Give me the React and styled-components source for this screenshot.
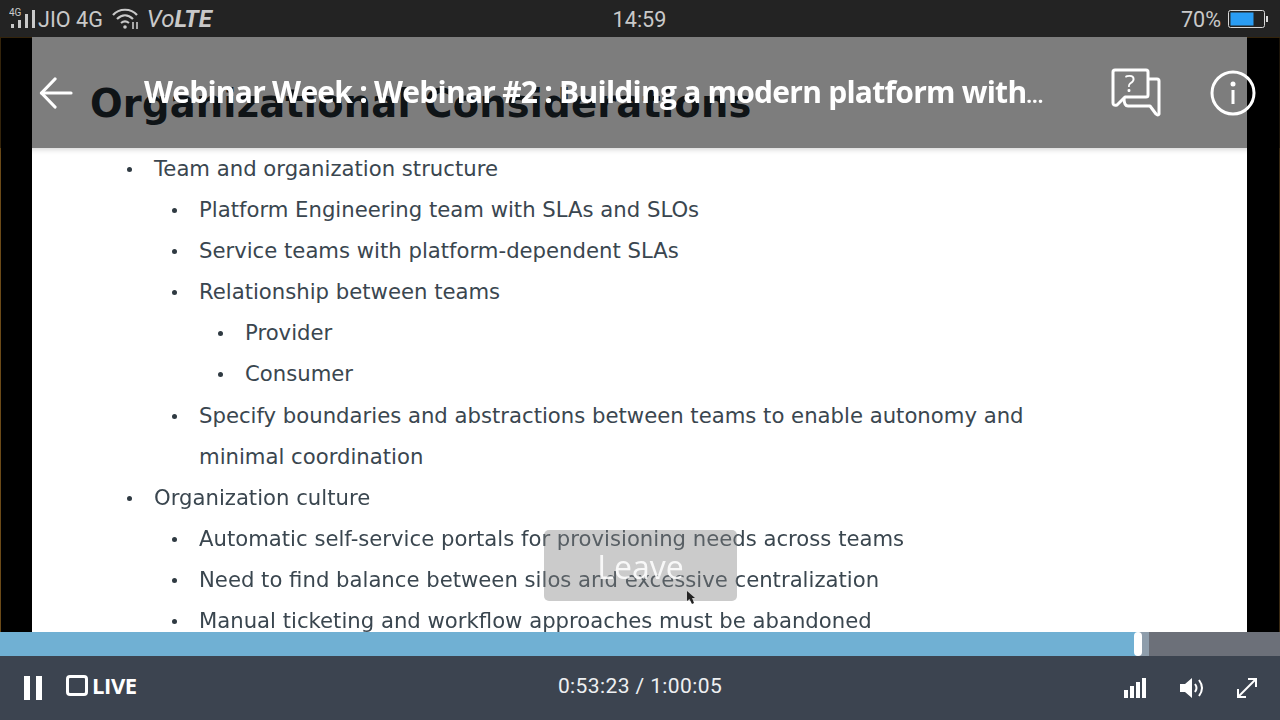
import styled, { createGlobalStyle } from "styled-components";

const GlobalStyle = createGlobalStyle`
  html, body {
    margin: 0;
    padding: 0;
    background: #000;
  }
  * {
    box-sizing: border-box;
  }
`;

const listIndent = [92, 15, 16];

const Screen = styled.div`
  width: 1280px;
  height: 720px;
  display: flex;
  flex-direction: column;
  overflow: hidden;
  font-family: "Roboto", "Liberation Sans", sans-serif;
`;

const StatusBar = styled.div`
  height: 37px;
  flex: none;
  display: grid;
  grid-template-columns: 1fr auto 1fr;
  align-items: center;
  padding: 1px 11px 0 10px;
  background: #232323;
  color: #c9c9c9;
  font-size: 21.6px;
`;

const StatusLeft = styled.div`
  display: flex;
  align-items: center;
  margin-left: -1px;
`;

const Carrier = styled.span`
  margin-left: 1px;
`;

const Volte = styled.span`
  margin-left: 7px;
  font-style: italic;
  font-size: 24px;
  b {
    font-weight: 700;
  }
`;

const StatusRight = styled.div`
  display: flex;
  align-items: center;
  justify-content: flex-end;
  gap: 7px;
`;

const Stage = styled.div`
  position: relative;
  flex: 1;
  min-height: 0;
  background: #000;
  padding: 0 33px 0 32px;
  overflow: hidden;
  box-shadow: inset 1px 1px 0 #6b4a18, inset -1px 0 0 #3a2a12;
`;

const Slide = styled.div`
  height: 100%;
  background: #fff;
  color: #3a464f;
  font-family: "DejaVu Sans", "Liberation Sans", sans-serif;
  font-size: 21.2px;
  line-height: 41.1px;
  filter: blur(0.35px);
`;

const SlideHeading = styled.h1`
  margin: 0;
  height: 111px;
  padding: 37px 0 0 58px;
  color: #1f2a30;
  font-size: 38.4px;
  line-height: 60px;
  font-weight: 700;
  letter-spacing: 0.2px;
  white-space: nowrap;
`;

const BulletList = styled.ul`
  list-style: none;
  margin: 0;
  padding: 0 0 0 ${({ $level }) => listIndent[$level]}px;
`;

const Bullet = styled.li`
  position: relative;
  width: ${({ $width }) => $width || 1000}px;
  padding-left: 30px;
  &::before {
    content: "";
    position: absolute;
    left: 3px;
    top: 19px;
    width: 5px;
    height: 5px;
    border-radius: 50%;
    background: #2f3a42;
  }
`;

const Header = styled.div`
  position: absolute;
  top: 0;
  left: 0;
  right: 0;
  height: 111px;
  display: flex;
  align-items: center;
  padding: 0 24px 0 39px;
  background: rgba(0, 0, 0, 0.51);
  box-shadow: 0 1px 6px rgba(0, 0, 0, 0.2);
  color: #fff;
`;

const BackButton = styled.div`
  display: flex;
  width: 105px;
  flex: none;
`;

const Title = styled.div`
  flex: none;
  margin-top: -2px;
  font-family: "Open Sans", "Noto Sans", sans-serif;
  font-size: 30px;
  font-weight: 700;
  letter-spacing: -0.75px;
  white-space: nowrap;
`;

const TitleDots = styled.span`
  font-size: 20px;
  letter-spacing: -0.5px;
`;

const HeaderIcons = styled.div`
  display: flex;
  align-items: center;
  margin-left: auto;
  gap: 49px;
`;

const LeaveButton = styled.div`
  position: absolute;
  left: 544px;
  top: 493px;
  width: 193px;
  height: 71px;
  display: flex;
  align-items: center;
  justify-content: center;
  padding-top: 2px;
  border-radius: 5px;
  background: rgba(130, 130, 130, 0.42);
  color: rgba(255, 255, 255, 0.88);
  font-family: "Open Sans", sans-serif;
  font-size: 32px;
  font-weight: 400;
`;

const Pointer = styled.svg`
  position: absolute;
  left: 686px;
  top: 553px;
`;

const Progress = styled.div`
  position: relative;
  flex: none;
  height: 24px;
  background: #6c7079;
`;

const Buffered = styled.div`
  height: 100%;
  background: #8e9dab;
`;

const Played = styled.div`
  height: 100%;
  background: #70b0d3;
`;

const Knob = styled.div`
  position: absolute;
  top: 0;
  width: 8px;
  height: 24px;
  border-radius: 4px;
  background: #fff;
`;

const Controls = styled.div`
  flex: none;
  height: 64px;
  display: grid;
  grid-template-columns: 1fr auto 1fr;
  align-items: center;
  padding: 0 24px;
  background: #3c4450;
  color: #fff;
`;

const ControlsLeft = styled.div`
  display: flex;
  align-items: center;
  gap: 24px;
`;

const PauseIcon = styled.div`
  display: flex;
  gap: 6px;
  span {
    width: 6px;
    height: 24px;
    background: #fff;
  }
`;

const LiveBadge = styled.div`
  display: flex;
  align-items: center;
  gap: 4px;
  margin-top: -6px;
  font-family: "Open Sans", sans-serif;
  font-size: 22px;
  font-weight: 700;
  letter-spacing: -0.4px;
`;

const LiveBox = styled.span`
  width: 22px;
  height: 21px;
  border: 3px solid #fff;
  border-radius: 4px;
`;

const TimeText = styled.div`
  font-size: 21px;
  color: #eef0f2;
  letter-spacing: 0.4px;
  margin-top: -4px;
`;

const ControlsRight = styled.div`
  display: flex;
  align-items: center;
  justify-content: flex-end;
  gap: 30px;
  margin-right: -2px;
  svg:first-child {
    margin-right: 4px;
  }
`;

const SignalIcon = () => (
  <svg width="28" height="26" viewBox="0 0 28 26" fill="#c9c9c9">
    <text x="0" y="10" fontSize="10" fontFamily="Roboto, sans-serif">4G</text>
    <rect x="2" y="18" width="3" height="4" />
    <rect x="9" y="14" width="3" height="8" />
    <rect x="16" y="8" width="3" height="14" />
    <rect x="23" y="4" width="3" height="18" />
  </svg>
);

const WifiIcon = () => (
  <svg width="28" height="22" viewBox="0 0 28 22" fill="none" stroke="#c9c9c9" strokeWidth="2.2" style={{ marginLeft: 9 }}>
    <path d="M1 7C7 0 19 0 25 7" />
    <path d="M5 11C10 6 16 6 21 11" />
    <path d="M9 15C11.500 13 14.500 13 17 15" />
    <circle cx="13" cy="19" r="1.800" fill="#c9c9c9" stroke="none" />
    <path d="M21 14V21M25 14V21" strokeWidth="1.600" />
  </svg>
);

const BatteryIcon = () => (
  <svg width="41" height="20" viewBox="0 0 41 20">
    <rect x="0.500" y="1.500" width="36" height="17" rx="2" fill="none" stroke="#d8d8d8" />
    <rect x="2.500" y="3.500" width="23" height="13" fill="#2a9df4" />
    <rect x="38" y="7" width="2" height="6" fill="#d8d8d8" />
  </svg>
);

const BackIcon = () => (
  <svg width="34" height="32" viewBox="0 0 34 32" fill="none" stroke="#fff" strokeWidth="3.200" strokeLinecap="round" strokeLinejoin="round">
    <path d="M2.500 16H32" />
    <path d="M16 2L2.500 16L16 30" />
  </svg>
);

const QuestionIcon = () => (
  <svg width="50" height="50" viewBox="0 0 50 50" fill="none" stroke="#fff" strokeWidth="3" strokeLinejoin="round">
    <path d="M4 2H35Q37 2 37 4V27Q37 29 35 29H14L6 37Q2 38 2 35V4Q2 2 4 2Z" />
    <path d="M38 11H46Q48 11 48 13V46Q47 48 45 46L39 38H17Q13 38 13 30" />
    <text x="19" y="24" fill="#fff" stroke="none" fontSize="24" textAnchor="middle" fontFamily="Open Sans, sans-serif">?</text>
  </svg>
);

const InfoIcon = () => (
  <svg width="46" height="46" viewBox="0 0 46 46" fill="none">
    <circle cx="23" cy="23" r="21" stroke="#fff" strokeWidth="3" />
    <circle cx="23" cy="14" r="2.500" fill="#fff" />
    <rect x="21.500" y="20" width="3" height="14" fill="#fff" />
  </svg>
);

const BarsIcon = () => (
  <svg width="22" height="22" viewBox="0 0 22 22" fill="#fff">
    <rect x="0" y="13" width="4" height="8" />
    <rect x="6" y="9" width="4" height="12" />
    <rect x="12" y="5" width="4" height="16" />
    <rect x="18" y="1" width="4" height="20" />
  </svg>
);

const VolumeIcon = () => (
  <svg width="26" height="22" viewBox="0 0 26 22" fill="none" stroke="#fff" strokeWidth="2">
    <path d="M0 7H5L12 1V21L5 15H0Z" fill="#fff" stroke="none" />
    <path d="M15 7Q18 11 15 15" />
    <path d="M19 3Q25 11 19 19" />
  </svg>
);

const ExpandIcon = () => (
  <svg width="22" height="22" viewBox="0 0 22 22" fill="none" stroke="#fff" strokeWidth="2">
    <path d="M2 20L20 2" />
    <path d="M12 2H20V10" />
    <path d="M2 12V20H10" />
  </svg>
);

export default function App() {
  return (
    <Screen>
      <GlobalStyle />
      <StatusBar>
        <StatusLeft>
          <SignalIcon />
          <Carrier>JIO 4G</Carrier>
          <WifiIcon />
          <Volte>
            Vo<b>LTE</b>
          </Volte>
        </StatusLeft>
        <span>14:59</span>
        <StatusRight>
          <span>70%</span>
          <BatteryIcon />
        </StatusRight>
      </StatusBar>

      <Stage>
        <Slide>
          <SlideHeading>Organizational Considerations</SlideHeading>
          <BulletList $level={0}>
            <Bullet>
              Team and organization structure
              <BulletList $level={1}>
                <Bullet>Platform Engineering team with SLAs and SLOs</Bullet>
                <Bullet>Service teams with platform-dependent SLAs</Bullet>
                <Bullet>
                  Relationship between teams
                  <BulletList $level={2}>
                    <Bullet>Provider</Bullet>
                    <Bullet>Consumer</Bullet>
                  </BulletList>
                </Bullet>
                <Bullet $width={860}>
                  Specify boundaries and abstractions between teams to enable autonomy and minimal coordination
                </Bullet>
              </BulletList>
            </Bullet>
            <Bullet>
              Organization culture
              <BulletList $level={1}>
                <Bullet>Automatic self-service portals for provisioning needs across teams</Bullet>
                <Bullet>Need to find balance between silos and excessive centralization</Bullet>
                <Bullet>Manual ticketing and workflow approaches must be abandoned</Bullet>
              </BulletList>
            </Bullet>
          </BulletList>
        </Slide>

        <Header>
          <BackButton>
            <BackIcon />
          </BackButton>
          <Title>
            Webinar Week : Webinar #2 : Building a modern platform with<TitleDots>…</TitleDots>
          </Title>
          <HeaderIcons>
            <QuestionIcon />
            <InfoIcon />
          </HeaderIcons>
        </Header>

        <LeaveButton>Leave</LeaveButton>
        <Pointer width="10" height="16" viewBox="0 0 10 16">
          <path d="M1 1V11L3.500 9L6 14L8 13L6 8H9Z" fill="#222" />
        </Pointer>
      </Stage>

      <Progress>
        <Buffered style={{ width: `${(1149 / 1280) * 100}%` }}>
          <Played style={{ width: `${(1138 / 1149) * 100}%` }} />
        </Buffered>
        <Knob style={{ left: 1134 }} />
      </Progress>

      <Controls>
        <ControlsLeft>
          <PauseIcon>
            <span />
            <span />
          </PauseIcon>
          <LiveBadge>
            <LiveBox />
            LIVE
          </LiveBadge>
        </ControlsLeft>
        <TimeText>0:53:23 / 1:00:05</TimeText>
        <ControlsRight>
          <BarsIcon />
          <VolumeIcon />
          <ExpandIcon />
        </ControlsRight>
      </Controls>
    </Screen>
  );
}
